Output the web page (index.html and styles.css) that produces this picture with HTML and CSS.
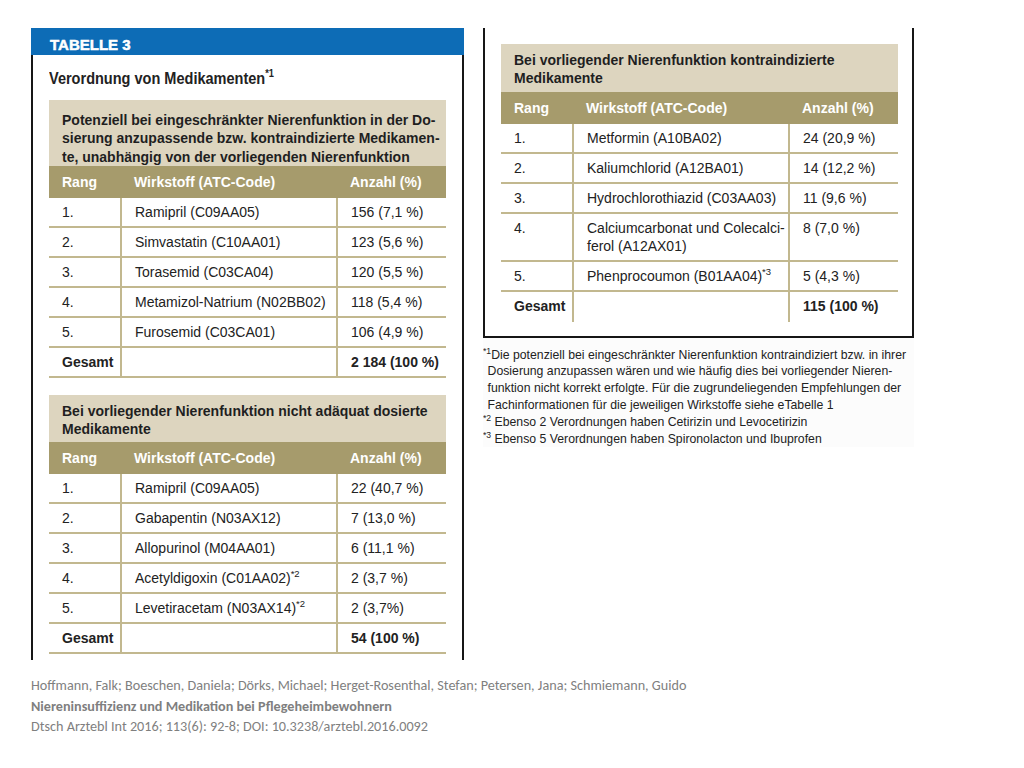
FILE: index.html
```html
<!DOCTYPE html>
<html lang="de">
<head>
<meta charset="utf-8">
<title>Tabelle 3 – Verordnung von Medikamenten</title>
<link rel="stylesheet" href="styles.css">
</head>
<body>
<div class="slide">
  <div class="figure">
    <section class="panel panel-left">
      <div class="panel-head">TABELLE 3</div>
      <div class="panel-body">
        <h1 class="heading"><span class="heading-text">Verordnung von Medikamenten<sup>*1</sup></span></h1>
        <table class="drug-table">
          <colgroup><col class="c-rank"><col class="c-drug"><col class="c-count"></colgroup>
          <thead>
            <tr><th colspan="3" class="title title-tall">Potenziell bei eingeschränkter Nierenfunktion in der Do-<br>sierung anzupassende bzw. kontraindizierte Medikamen-<br>te, unabhängig von der vorliegenden Nierenfunktion</th></tr>
            <tr class="cols"><th>Rang</th><th>Wirkstoff (ATC-Code)</th><th>Anzahl (%)</th></tr>
          </thead>
          <tbody>
            <tr><td>1.</td><td>Ramipril (C09AA05)</td><td>156 (7,1 %)</td></tr>
            <tr><td>2.</td><td>Simvastatin (C10AA01)</td><td>123 (5,6 %)</td></tr>
            <tr><td>3.</td><td>Torasemid (C03CA04)</td><td>120 (5,5 %)</td></tr>
            <tr><td>4.</td><td>Metamizol-Natrium (N02BB02)</td><td>118 (5,4 %)</td></tr>
            <tr><td>5.</td><td>Furosemid (C03CA01)</td><td>106 (4,9 %)</td></tr>
            <tr class="total"><td>Gesamt</td><td></td><td>2 184 (100 %)</td></tr>
          </tbody>
        </table>
        <table class="drug-table second">
          <colgroup><col class="c-rank"><col class="c-drug"><col class="c-count"></colgroup>
          <thead>
            <tr><th colspan="3" class="title">Bei vorliegender Nierenfunktion nicht adäquat dosierte<br>Medikamente</th></tr>
            <tr class="cols"><th>Rang</th><th>Wirkstoff (ATC-Code)</th><th>Anzahl (%)</th></tr>
          </thead>
          <tbody>
            <tr><td>1.</td><td>Ramipril (C09AA05)</td><td>22 (40,7 %)</td></tr>
            <tr><td>2.</td><td>Gabapentin (N03AX12)</td><td>7 (13,0 %)</td></tr>
            <tr><td>3.</td><td>Allopurinol (M04AA01)</td><td>6 (11,1 %)</td></tr>
            <tr><td>4.</td><td>Acetyldigoxin (C01AA02)<sup>*2</sup></td><td>2 (3,7 %)</td></tr>
            <tr><td>5.</td><td>Levetiracetam (N03AX14)<sup>*2</sup></td><td>2 (3,7%)</td></tr>
            <tr class="total"><td>Gesamt</td><td></td><td>54 (100 %)</td></tr>
          </tbody>
        </table>
      </div>
    </section>
    <div class="right-col">
      <section class="panel panel-right">
        <table class="drug-table">
          <colgroup><col class="c-rank"><col class="c-drug"><col class="c-count"></colgroup>
          <thead>
            <tr><th colspan="3" class="title">Bei vorliegender Nierenfunktion kontraindizierte<br>Medikamente</th></tr>
            <tr class="cols"><th>Rang</th><th>Wirkstoff (ATC-Code)</th><th>Anzahl (%)</th></tr>
          </thead>
          <tbody>
            <tr><td>1.</td><td>Metformin (A10BA02)</td><td>24 (20,9 %)</td></tr>
            <tr><td>2.</td><td>Kaliumchlorid (A12BA01)</td><td>14 (12,2 %)</td></tr>
            <tr><td>3.</td><td>Hydrochlorothiazid (C03AA03)</td><td>11 (9,6 %)</td></tr>
            <tr><td>4.</td><td>Calciumcarbonat und Colecalci-<br>ferol (A12AX01)</td><td>8 (7,0 %)</td></tr>
            <tr><td>5.</td><td>Phenprocoumon (B01AA04)<sup>*3</sup></td><td>5 (4,3 %)</td></tr>
            <tr class="total last"><td>Gesamt</td><td></td><td>115 (100 %)</td></tr>
          </tbody>
        </table>
      </section>
      <div class="notes-wrap">
        <div class="footnotes">
          <p class="note hang"><sup>*1</sup>Die potenziell bei eingeschränkter Nierenfunktion kontraindiziert bzw. in ihrer<br>Dosierung anzupassen wären und wie häufig dies bei vorliegender Nieren-<br>funktion nicht korrekt erfolgte. Für die zugrundeliegenden Empfehlungen der<br>Fachinformationen für die jeweiligen Wirkstoffe siehe eTabelle 1</p>
          <p class="note"><sup>*2</sup> Ebenso 2 Verordnungen haben Cetirizin und Levocetirizin</p>
          <p class="note"><sup>*3</sup> Ebenso 5 Verordnungen haben Spironolacton und Ibuprofen</p>
        </div>
      </div>
    </div>
  </div>
  <div class="citation">
    <p>Hoffmann, Falk; Boeschen, Daniela; Dörks, Michael; Herget-Rosenthal, Stefan; Petersen, Jana; Schmiemann, Guido</p>
    <p class="cit-title">Niereninsuffizienz und Medikation bei Pflegeheimbewohnern</p>
    <p>Dtsch Arztebl Int 2016; 113(6): 92-8; DOI: 10.3238/arztebl.2016.0092</p>
  </div>
</div>
</body>
</html>
```

FILE: styles.css
```css
html, body {
  margin: 0;
  padding: 0;
  background: #ffffff;
}

body {
  font-family: "Liberation Sans", Arial, sans-serif;
  color: #1e1e1e;
}

.slide {
  width: 1024px;
  height: 768px;
  box-sizing: border-box;
  padding: 28px 0 0 31px;
}

.figure {
  display: flex;
  align-items: flex-start;
  gap: 19px;
}

/* ---------- left panel ---------- */
.panel-left {
  width: 433px;
}

.panel-head {
  height: 27px;
  box-sizing: border-box;
  padding: 9px 0 0 19px;
  background: #0d6cb6;
  color: #ffffff;
  font-weight: bold;
  font-size: 15px;
  line-height: 16px;
  -webkit-text-stroke: 0.5px #ffffff;
}

.panel-body {
  border-left: 2px solid #161616;
  border-right: 2px solid #161616;
  padding: 13px 14px 6px 16px;
}

.heading {
  margin: 0 0 12px 0;
  font-size: 16.5px;
  line-height: 20px;
  font-weight: bold;
  color: #222222;
}

.heading-text {
  display: inline-block;
  transform: scaleX(0.88);
  transform-origin: left center;
  white-space: nowrap;
}

.heading sup {
  font-size: 10.5px;
  line-height: 0;
  vertical-align: 7px;
}

/* ---------- tables ---------- */
.drug-table {
  width: 397px;
  border-collapse: collapse;
  table-layout: fixed;
  font-size: 14px;
}

.drug-table.second {
  margin-top: 17px;
}

.c-rank { width: 72px; }
.c-drug { width: 216px; }
.c-count { width: 109px; }

.drug-table th.title {
  background: #ddd5bf;
  color: #1f1f1f;
  text-align: left;
  font-weight: bold;
  line-height: 18.3px;
  padding: 7px 13px 4px 13px;
  white-space: nowrap;
}

.drug-table th.title-tall {
  padding: 11px 13px 0 13px;
}

.drug-table tr.cols th {
  background: #a69b6c;
  color: #ffffff;
  height: 32px;
  box-sizing: border-box;
  padding: 0 13px;
  text-align: left;
  font-weight: bold;
  vertical-align: middle;
  line-height: 18px;
}

.drug-table td {
  padding: 5px 13px 5px 13px;
  line-height: 18px;
  vertical-align: top;
  white-space: nowrap;
  border-bottom: 2px solid #c2b88f;
  color: #222222;
}

.drug-table td + td {
  border-left: 2px solid #c2b88f;
}

.drug-table td sup {
  font-size: 9.5px;
  line-height: 0;
  vertical-align: 6px;
}

.drug-table tr.total td {
  font-weight: bold;
}

.drug-table tr.last td {
  border-bottom: none;
  padding-bottom: 7px;
}

/* ---------- right column ---------- */
.right-col {
  width: 431px;
}

.panel-right {
  border-left: 2px solid #161616;
  border-right: 2px solid #161616;
  border-bottom: 2px solid #161616;
  padding: 16px 14px 14px 16px;
}

.notes-wrap {
  padding-top: 9px;
  height: 100px;
  background: #fcfcfc;
}

.footnotes {
  width: 470px;
  transform: scaleX(0.908);
  transform-origin: left top;
  font-size: 13.5px;
  line-height: 16.8px;
  color: #222222;
}

.note {
  margin: 0;
  white-space: nowrap;
}

.note.hang {
  padding-left: 5px;
  text-indent: -5px;
}

.note sup {
  font-size: 9.5px;
  line-height: 0;
  vertical-align: 5px;
}

/* ---------- citation ---------- */
.citation {
  margin-top: 15px;
  font-family: Carlito, Calibri, Lato, "Liberation Sans", sans-serif;
  font-size: 14.2px;
  line-height: 20.5px;
  color: #7f7f7f;
}

.citation p {
  margin: 0;
  white-space: nowrap;
}

.citation .cit-title {
  font-weight: bold;
}
```
